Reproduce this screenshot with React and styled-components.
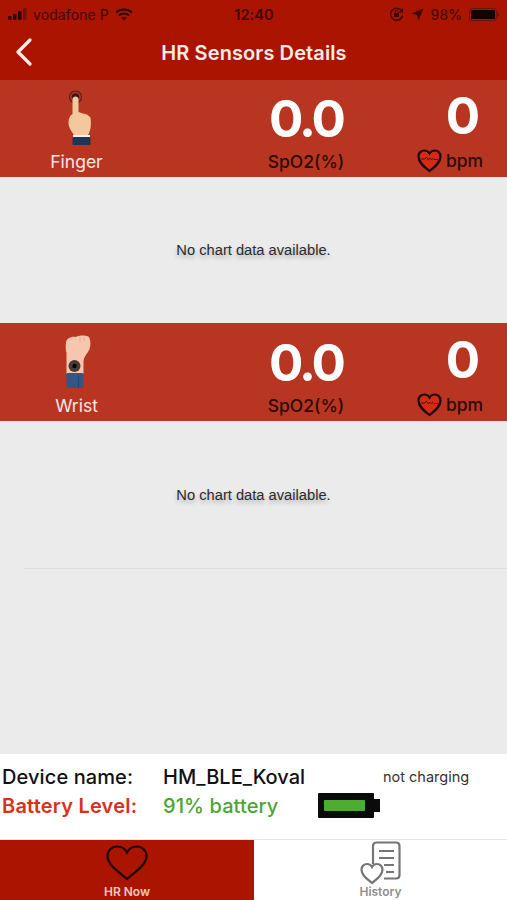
import React from 'react'
import styled, { createGlobalStyle } from 'styled-components'

const GlobalStyle = createGlobalStyle`
  html, body { margin: 0; padding: 0; background: #fff; }
  body { font-family: Inter, "Liberation Sans", Arial, sans-serif; }
`

const Screen = styled.div`
  width: 507px;
  height: 900px;
  display: flex;
  flex-direction: column;
  overflow: hidden;
`

const Header = styled.header`
  height: 80px;
  flex: none;
  background: #ab1400;
  display: flex;
  flex-direction: column;
`

const StatusBar = styled.div`
  height: 28px;
  padding: 0 7px 0 8px;
  display: grid;
  grid-template-columns: 1fr auto 1fr;
  align-items: center;
  color: #3d0a02;
  font-size: 14px;
  letter-spacing: 0.1px;
`

const StatusGroup = styled.div`
  display: flex;
  align-items: center;
  gap: ${p => p.$gap || 6}px;
  justify-content: ${p => (p.$end ? 'flex-end' : 'flex-start')};
`

const Clock = styled.span`
  font-weight: 600;
  font-size: 14.5px;
`

const NavBar = styled.div`
  flex: 1;
  display: flex;
  align-items: center;
  justify-content: center;
  padding: 0 0 3px 1px;
  position: relative;
`

const BackButton = styled.svg`
  position: absolute;
  left: 15px;
  top: 10px;
`

const NavTitle = styled.h1`
  margin: 0;
  color: #fbeae6;
  font-size: 20px;
  font-weight: 600;
  letter-spacing: 0.1px;
`

const Sensor = styled.section`
  height: ${p => p.$height}px;
  flex: none;
  background: #b83522;
  display: grid;
  grid-template-columns: 153px 1fr 88px;
`

const SensorCell = styled.div`
  display: flex;
  flex-direction: column;
  align-items: center;
  justify-content: flex-end;
  padding-bottom: 4px;
  padding-left: ${p => p.$inset || 0}px;
  position: relative;
`

const SensorIcon = styled.svg`
  position: absolute;
  left: 50%;
  top: 8px;
  transform: translateX(-50%);
`

const SensorName = styled.span`
  color: #fbe6e0;
  font-size: 17.5px;
  line-height: 22px;
`

const Value = styled.div`
  color: #fff;
  font-size: 51px;
  line-height: 60px;
  font-weight: 700;
  letter-spacing: ${p => p.$tight || 0}px;
  margin-bottom: 2px;
`

const ValueLabel = styled.div`
  display: flex;
  align-items: center;
  gap: 4px;
  color: #2c0a04;
  font-size: 17.5px;
  line-height: 22px;
  font-weight: 500;
  white-space: nowrap;
  margin-right: ${p => p.$pull || 0}px;
`

const ChartPanel = styled.div`
  height: ${p => p.$height}px;
  flex: none;
  background: #ebebeb;
  display: flex;
  align-items: center;
  justify-content: center;
  position: relative;
`

const GridLine = styled.div`
  position: absolute;
  left: 24px;
  right: 0;
  bottom: 0;
  height: 1px;
  background: #dcdcdc;
`

const ChartEmpty = styled.span`
  color: #2b2b2b;
  font-size: 14.7px;
  font-family: "Liberation Sans", Arial, sans-serif;
  text-shadow: 0 3px 4px rgba(0, 0, 0, 0.25);
`

const ChartFill = styled.div`
  flex: 1;
  background: #ebebeb;
`

const DeviceInfo = styled.div`
  height: 86px;
  flex: none;
  box-sizing: border-box;
  background: #fff;
  padding: 8px 0 0 2px;
  display: grid;
  grid-template-columns: 161px 155px 1fr;
  grid-auto-rows: 29px;
  align-items: center;
  font-size: 20px;
  border-bottom: 1px solid #e6e6e6;
`

const InfoText = styled.span`
  color: ${p => p.$color || '#111'};
  font-weight: ${p => p.$weight || 400};
  letter-spacing: ${p => p.$track || 0}px;
  white-space: nowrap;
`

const ChargeState = styled.span`
  color: #333;
  font-size: 14.5px;
  padding-left: 65px;
  white-space: nowrap;
`

const BatteryCell = styled.div`
  display: flex;
  align-items: center;
`

const TabBar = styled.nav`
  height: 60px;
  flex: none;
  display: grid;
  grid-template-columns: 254px 1fr;
`

const Tab = styled.div`
  background: ${p => (p.$active ? '#ab1400' : '#fff')};
  color: ${p => (p.$active ? '#f3c9c0' : '#8f8f8f')};
  display: flex;
  flex-direction: column;
  align-items: center;
  font-size: 12px;
  font-weight: 600;
  padding-top: ${p => (p.$active ? 5 : 1)}px;
`

const TabInner = styled.div`
  position: relative;
  width: 100%;
  flex: 1;
  display: flex;
  justify-content: center;
  align-items: flex-start;
`

const TabLabel = styled.span`
  position: absolute;
  bottom: 1px;
  left: 0;
  right: 0;
  text-align: center;
`

const Signal = () => (
  <svg width="19" height="12" viewBox="0 0 19 12">
    <rect x="0" y="8" width="3.5" height="4" rx="1" fill="#2a0702" />
    <rect x="5" y="6" width="3.5" height="6" rx="1" fill="#2a0702" />
    <rect x="10" y="3" width="3.5" height="9" rx="1" fill="#2a0702" />
    <rect x="15" y="0" width="3.5" height="12" rx="1" fill="#6b1408" />
  </svg>
)

const Wifi = () => (
  <svg width="18" height="13" viewBox="0 0 18 13" fill="none" stroke="#2a0702" strokeWidth="2">
    <path d="M1 4.5C5.5.5 12.5.5 17 4.5" />
    <path d="M3.8 7.4c3-2.5 7.4-2.5 10.4 0" />
    <path d="M9 12.6 6.4 10c1.500-1.200 3.700-1.200 5.200 0z" fill="#2a0702" stroke="none" />
  </svg>
)

const RotationLock = () => (
  <svg width="15" height="15" viewBox="0 0 15 15" fill="none" stroke="#3d0a02" strokeWidth="1.500">
    <path d="M13.500 8.500a6 6 0 1 1-.6-4" />
    <path d="M13.500 1.500v3.500h-3.500" strokeWidth="1.200" />
    <rect x="5" y="6" width="5" height="4" fill="#3d0a02" stroke="none" />
    <path d="M6 6V5a1.500 1.500 0 0 1 3 0v1" strokeWidth="1" />
  </svg>
)

const LocationArrow = () => (
  <svg width="13" height="13" viewBox="0 0 13 13">
    <path d="M12.500.5 7.500 12.500 6 7 .5 5.500z" fill="#3d0a02" />
  </svg>
)

const StatusBattery = () => (
  <svg width="31" height="13" viewBox="0 0 31 13">
    <rect x="0.500" y="0.500" width="27" height="12" rx="3" fill="none" stroke="#6b1408" />
    <rect x="2" y="2" width="24" height="9" rx="1.500" fill="#120201" />
    <rect x="28.500" y="4.500" width="1.500" height="4" rx="0.700" fill="#6b1408" />
  </svg>
)

const FingerIcon = () => (
  <SensorIcon width="36" height="60" viewBox="0 0 36 60">
    <circle cx="16.500" cy="9" r="6" fill="none" stroke="#5a2018" strokeWidth="1.200" />
    <circle cx="16.500" cy="9" r="3.800" fill="#3c1a14" />
    <path d="M13.500 11c0-3.500 6-3.500 6 0v13l4.500 1.500 4 1 3.500 3c.5 3 .5 8 0 10.500-.5 3-1.500 5-2.500 7.500H15c-1-3-5.500-6.500-5.500-13 0-4.500 1.500-7 4-8.500z" fill="#f5c79c" />
    <rect x="14" y="47" width="17" height="2" fill="#f4f0ea" />
    <rect x="13.500" y="49" width="18" height="8" rx="1" fill="#1f3552" />
  </SensorIcon>
)

const WristIcon = () => (
  <SensorIcon width="36" height="60" viewBox="0 0 36 60">
    <path d="M7 12C7 7 13 5 17 6c3-2 10-2 13 0 2 4 2 11-1 15-2 3-4 5-4.500 9v13h-17V22c-1-4-1-7-.5-10z" fill="#f7c6ae" />
    <path d="M21 6v5M25 6v4" stroke="#e2a48a" strokeWidth="0.800" fill="none" />
    <circle cx="15.500" cy="35" r="6" fill="#4a3a34" />
    <circle cx="15.500" cy="35" r="2.200" fill="#000" />
    <rect x="7.500" y="42" width="17" height="15" rx="1" fill="#355587" />
    <rect x="19" y="45" width="1" height="12" fill="#2a4470" />
  </SensorIcon>
)

const PulseHeart = () => (
  <svg width="25" height="25" viewBox="0 0 25 25">
    <path d="M12.500 23C6 18 1.500 14 1.500 8.500 1.500 4.800 4.300 2.500 7.300 2.500c2.200 0 4 1 5.200 3 1.200-2 3-3 5.200-3 3 0 5.800 2.300 5.800 6 0 5.500-4.500 9.500-11 14.500z" fill="#d42a18" stroke="#1d0705" strokeWidth="2.200" />
    <path d="M4 11h4l1.500-2 2 3 1.500-2 1.500 1.500 1.500-1 1 1h4" fill="none" stroke="#4a0c06" strokeWidth="0.900" />
  </svg>
)

const BatteryIcon = () => (
  <svg width="62" height="25" viewBox="0 0 62 25">
    <rect x="0" y="0" width="56" height="25" rx="1" fill="#0b0b0b" />
    <rect x="56" y="6" width="6" height="13" fill="#0b0b0b" />
    <rect x="6" y="7" width="41" height="11" rx="1" fill="#4eac34" />
  </svg>
)

const HeartTab = () => (
  <svg width="42" height="36" viewBox="0 0 42 36" fill="none" stroke="#1b0603" strokeWidth="2.200">
    <path d="M21 34C10 25 1.500 19 1.500 11 1.500 5.500 6 1.500 11 1.500c4.200 0 8 2 10 6 2-4 5.800-6 10-6 5 0 9.500 4 9.500 9.500 0 8-8.500 14-19.500 23z" />
  </svg>
)

const HistoryTab = () => (
  <svg width="42" height="45" viewBox="0 0 42 45" fill="none" stroke="#757575" strokeWidth="2.200">
    <path d="M13 23V5c0-2 1-3.500 3.500-3.500H36c2.500 0 3.500 1.500 3.500 3.500v29c0 2-1 3.500-3.500 3.500H24" />
    <path d="M19 10h15M19 17h15M24 24h10M26 31h8" />
    <path d="M12 42C6 37 1.500 34 1.500 28.500c0-3 2.500-5.500 5.500-5.500 2 0 4 1 5 3 1-2 3-3 5-3 3 0 5.500 2.500 5.500 5.500C22.500 34 18 37 12 42z" fill="#fff" />
  </svg>
)

const SensorRow = ({ name, icon, height }) => (
  <Sensor $height={height}>
    <SensorCell>
      {icon}
      <SensorName>{name}</SensorName>
    </SensorCell>
    <SensorCell $inset={40}>
      <Value $tight={-3}>0.0</Value>
      <ValueLabel>SpO2(%)</ValueLabel>
    </SensorCell>
    <SensorCell>
      <Value>0</Value>
      <ValueLabel $pull={26}><PulseHeart />bpm</ValueLabel>
    </SensorCell>
  </Sensor>
)

export default function App() {
  return (
    <Screen>
      <GlobalStyle />
      <Header>
        <StatusBar>
          <StatusGroup>
            <Signal />
            <span>vodafone P</span>
            <Wifi />
          </StatusGroup>
          <Clock>12:40</Clock>
          <StatusGroup $end $gap={7}>
            <RotationLock />
            <LocationArrow />
            <span>98%</span>
            <StatusBattery />
          </StatusGroup>
        </StatusBar>
        <NavBar>
          <BackButton width="18" height="28" viewBox="0 0 18 28" fill="none" stroke="#fbeae6" strokeWidth="3.200" strokeLinecap="round" strokeLinejoin="round">
            <path d="M15 2 3 14l12 12" />
          </BackButton>
          <NavTitle>HR Sensors Details</NavTitle>
        </NavBar>
      </Header>
      <SensorRow name="Finger" icon={<FingerIcon />} height={97} />
      <ChartPanel $height={146}>
        <ChartEmpty>No chart data available.</ChartEmpty>
      </ChartPanel>
      <SensorRow name="Wrist" icon={<WristIcon />} height={98} />
      <ChartPanel $height={148}>
        <ChartEmpty>No chart data available.</ChartEmpty>
        <GridLine />
      </ChartPanel>
      <ChartFill />
      <DeviceInfo>
        <InfoText $weight={500} $track={0.1}>Device name:</InfoText>
        <InfoText $weight={500}>HM_BLE_Koval</InfoText>
        <ChargeState>not charging</ChargeState>
        <InfoText $color="#d9301c" $weight={600} $track={0.2}>Battery Level:</InfoText>
        <InfoText $color="#4aa536" $weight={500} $track={0.1}>91% battery</InfoText>
        <BatteryCell><BatteryIcon /></BatteryCell>
      </DeviceInfo>
      <TabBar>
        <Tab $active>
          <TabInner>
            <HeartTab />
            <TabLabel>HR Now</TabLabel>
          </TabInner>
        </Tab>
        <Tab>
          <TabInner>
            <HistoryTab />
            <TabLabel>History</TabLabel>
          </TabInner>
        </Tab>
      </TabBar>
    </Screen>
  )
}
